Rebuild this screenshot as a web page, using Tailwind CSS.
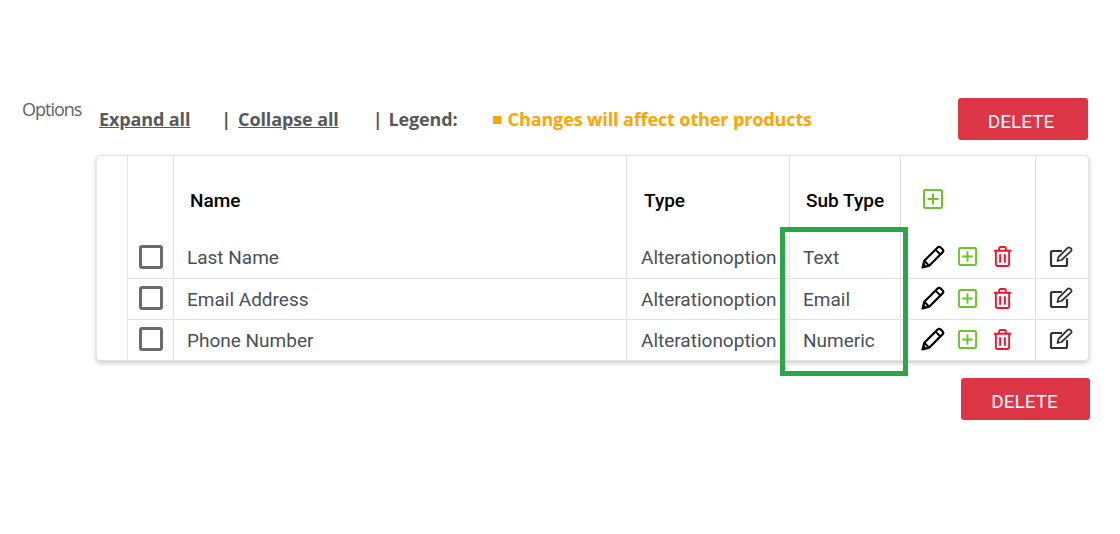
<!DOCTYPE html>
<html lang="en">
<head>
    <meta charset="UTF-8">
    <title>Options</title>
    <script src="https://cdn.jsdelivr.net/npm/@tailwindcss/browser@4"></script>
</head>
<body class="bg-white w-[1120px] h-[534px] overflow-hidden relative font-['Roboto',sans-serif]">
    <svg width="0" height="0" class="absolute">
        <symbol id="pencil" viewBox="0 0 24 24">
            <path d="M1.5 22.500l1.800-6.700L16.600 2.500c.9-.9 2.200-.9 3.100 0l1.800 1.800c.9.9.9 2.200 0 3.100L8.200 20.700z" fill="none" stroke="currentColor" stroke-width="2.200" stroke-linejoin="round"/>
            <path d="M14.500 4.600l4.900 4.900M3.300 15.800l4.900 4.900" fill="none" stroke="currentColor" stroke-width="2"/>
            <path d="M1 23l1.400-5.200 3.800 3.800z" fill="currentColor"/>
        </symbol>
        <symbol id="plus" viewBox="0 0 20 20">
            <rect x="1" y="1" width="18" height="18" rx="1.500" fill="none" stroke="currentColor" stroke-width="2"/>
            <path d="M10 4.500v11M4.500 10h11" fill="none" stroke="currentColor" stroke-width="2"/>
        </symbol>
        <symbol id="trash" viewBox="0 0 20 22">
            <path d="M1 5h18M6.500 5V2.600c0-.9.6-1.600 1.500-1.600h4c.9 0 1.500.7 1.500 1.600V5" fill="none" stroke="currentColor" stroke-width="2"/>
            <path d="M3 5v14.500c0 .9.6 1.500 1.500 1.500h11c.9 0 1.500-.6 1.500-1.500V5" fill="none" stroke="currentColor" stroke-width="2"/>
            <path d="M7.500 8.500v9M12.500 8.500v9" fill="none" stroke="currentColor" stroke-width="2"/>
        </symbol>
        <symbol id="edit" viewBox="0 0 24 22">
            <path d="M13 5H3.500C2.600 5 2 5.600 2 6.500v12c0 .9.600 1.500 1.500 1.500h13c.9 0 1.500-.6 1.500-1.500V12" fill="none" stroke="currentColor" stroke-width="2.200"/>
            <path d="M8.500 15l1-4L18.700 1.800c.7-.7 1.700-.7 2.400 0l.9.9c.7.7.7 1.700 0 2.400L12.500 14z" fill="none" stroke="currentColor" stroke-width="1.800" stroke-linejoin="round"/>
        </symbol>
    </svg>

    <div class="pt-[98px] pl-[22px] w-[1120px]">
        <div class="flex h-[42px]">
            <span class="w-[77px] -mt-[1px] text-[18px] leading-[24px] text-[#5f6368] font-['Open_Sans',sans-serif] tracking-[-1px]">Options</span>
            <div class="flex items-center h-[42px] font-['Open_Sans',sans-serif] font-bold text-[18px] text-[#58595b] tracking-[-0.12px]">
                <a class="underline">Expand all</a>
                <span class="ml-[31px]">|</span>
                <a class="underline ml-[7px]">Collapse all</a>
                <span class="ml-[34px]">|</span>
                <span class="ml-[6px]">Legend:</span>
                <span class="ml-[35px] w-[8px] h-[8px] mt-[2px] bg-[#ffa500]"></span>
                <span class="ml-[7px] text-[#ffa500]">Changes will affect other products</span>
            </div>
            <button class="ml-auto mr-[32px] w-[130px] h-[42px] pt-[6px] pr-[4px] bg-[#dc3545] rounded-[3px] text-white text-[19px]">DELETE</button>
        </div>

        <div class="ml-[74px] mt-[15px] w-[993px] h-[206px] bg-white rounded-[4px] border border-[#e4e4e4] shadow-[0_2px_5px_rgba(0,0,0,0.22)] grid grid-cols-[30px_46px_453px_163px_111px_135px_1fr] grid-rows-[81px_41px_41px_41px] text-[19px] text-[#495057] overflow-hidden">
            <div></div>
            <div class="border-l border-[#e2e2e2]"></div>
            <div class="border-l border-[#e2e2e2] pl-[16px] pt-[9px] flex items-center font-medium text-black">Name</div>
            <div class="border-l border-[#e2e2e2] pl-[17px] pt-[9px] flex items-center font-medium text-black">Type</div>
            <div class="border-l border-[#e2e2e2] pl-[16px] pt-[9px] flex items-center font-medium text-black">Sub Type</div>
            <div class="border-l border-[#e2e2e2] pl-[22px] pt-[5px] flex items-center text-[#6cc32d]"><svg class="w-[20px] h-[20px]"><use href="#plus"/></svg></div>
            <div class="border-l border-[#e2e2e2]"></div>

            <div></div>
            <div class="border-l border-[#e2e2e2] flex items-center justify-center pb-[2px]"><span class="w-[24px] h-[24px] border-[3px] border-[#6b6b6b] rounded-[3px]"></span></div>
            <div class="border-l border-[#e2e2e2] pl-[13px] pt-[2px] flex items-center">Last Name</div>
            <div class="border-l border-[#e2e2e2] pl-[14px] pt-[2px] flex items-center">Alterationoption</div>
            <div class="border-l border-[#e2e2e2] pl-[13px] pt-[2px] flex items-center">Text</div>
            <div class="border-l border-[#e2e2e2] pl-[20px] pb-[2px] flex items-center">
                <svg class="w-[24px] h-[24px] text-black"><use href="#pencil"/></svg>
                <svg class="ml-[13px] w-[19px] h-[19px] text-[#6cc32d]"><use href="#plus"/></svg>
                <svg class="ml-[16px] w-[19px] h-[21px] text-[#f0142f]"><use href="#trash"/></svg>
            </div>
            <div class="border-l border-[#e2e2e2] pl-[13px] pb-[2px] flex items-center text-[#333]"><svg class="w-[24px] h-[22px]"><use href="#edit"/></svg></div>

            <div class="border-t border-transparent"></div>
            <div class="border-l border-t border-[#e2e2e2] flex items-center justify-center pb-[2px]"><span class="w-[24px] h-[24px] border-[3px] border-[#6b6b6b] rounded-[3px]"></span></div>
            <div class="border-l border-t border-[#e2e2e2] pl-[13px] pt-[2px] flex items-center">Email Address</div>
            <div class="border-l border-t border-[#e2e2e2] pl-[14px] pt-[2px] flex items-center">Alterationoption</div>
            <div class="border-l border-t border-[#e2e2e2] pl-[13px] pt-[2px] flex items-center">Email</div>
            <div class="border-l border-t border-[#e2e2e2] pl-[20px] pb-[2px] flex items-center">
                <svg class="w-[24px] h-[24px] text-black"><use href="#pencil"/></svg>
                <svg class="ml-[13px] w-[19px] h-[19px] text-[#6cc32d]"><use href="#plus"/></svg>
                <svg class="ml-[16px] w-[19px] h-[21px] text-[#f0142f]"><use href="#trash"/></svg>
            </div>
            <div class="border-l border-t border-[#e2e2e2] pl-[13px] pb-[2px] flex items-center text-[#333]"><svg class="w-[24px] h-[22px]"><use href="#edit"/></svg></div>

            <div class="border-t border-transparent"></div>
            <div class="border-l border-t border-[#e2e2e2] flex items-center justify-center pb-[2px]"><span class="w-[24px] h-[24px] border-[3px] border-[#6b6b6b] rounded-[3px]"></span></div>
            <div class="border-l border-t border-[#e2e2e2] pl-[13px] pt-[2px] flex items-center">Phone Number</div>
            <div class="border-l border-t border-[#e2e2e2] pl-[14px] pt-[2px] flex items-center">Alterationoption</div>
            <div class="border-l border-t border-[#e2e2e2] pl-[13px] pt-[2px] flex items-center">Numeric</div>
            <div class="border-l border-t border-[#e2e2e2] pl-[20px] pb-[2px] flex items-center">
                <svg class="w-[24px] h-[24px] text-black"><use href="#pencil"/></svg>
                <svg class="ml-[13px] w-[19px] h-[19px] text-[#6cc32d]"><use href="#plus"/></svg>
                <svg class="ml-[16px] w-[19px] h-[21px] text-[#f0142f]"><use href="#trash"/></svg>
            </div>
            <div class="border-l border-t border-[#e2e2e2] pl-[13px] pb-[2px] flex items-center text-[#333]"><svg class="w-[24px] h-[22px]"><use href="#edit"/></svg></div>
        </div>

        <div class="flex justify-end mt-[17px] pr-[30px]">
            <button class="w-[129px] h-[42px] pt-[6px] pr-[2px] bg-[#dc3545] rounded-[3px] text-white text-[19px]">DELETE</button>
        </div>
    </div>

    <!-- highlight drawn over the sub type column -->
    <div class="absolute left-[780px] top-[227px] w-[128px] h-[149px] border-[5px] border-[#28a745]"></div>
</body>
</html>
